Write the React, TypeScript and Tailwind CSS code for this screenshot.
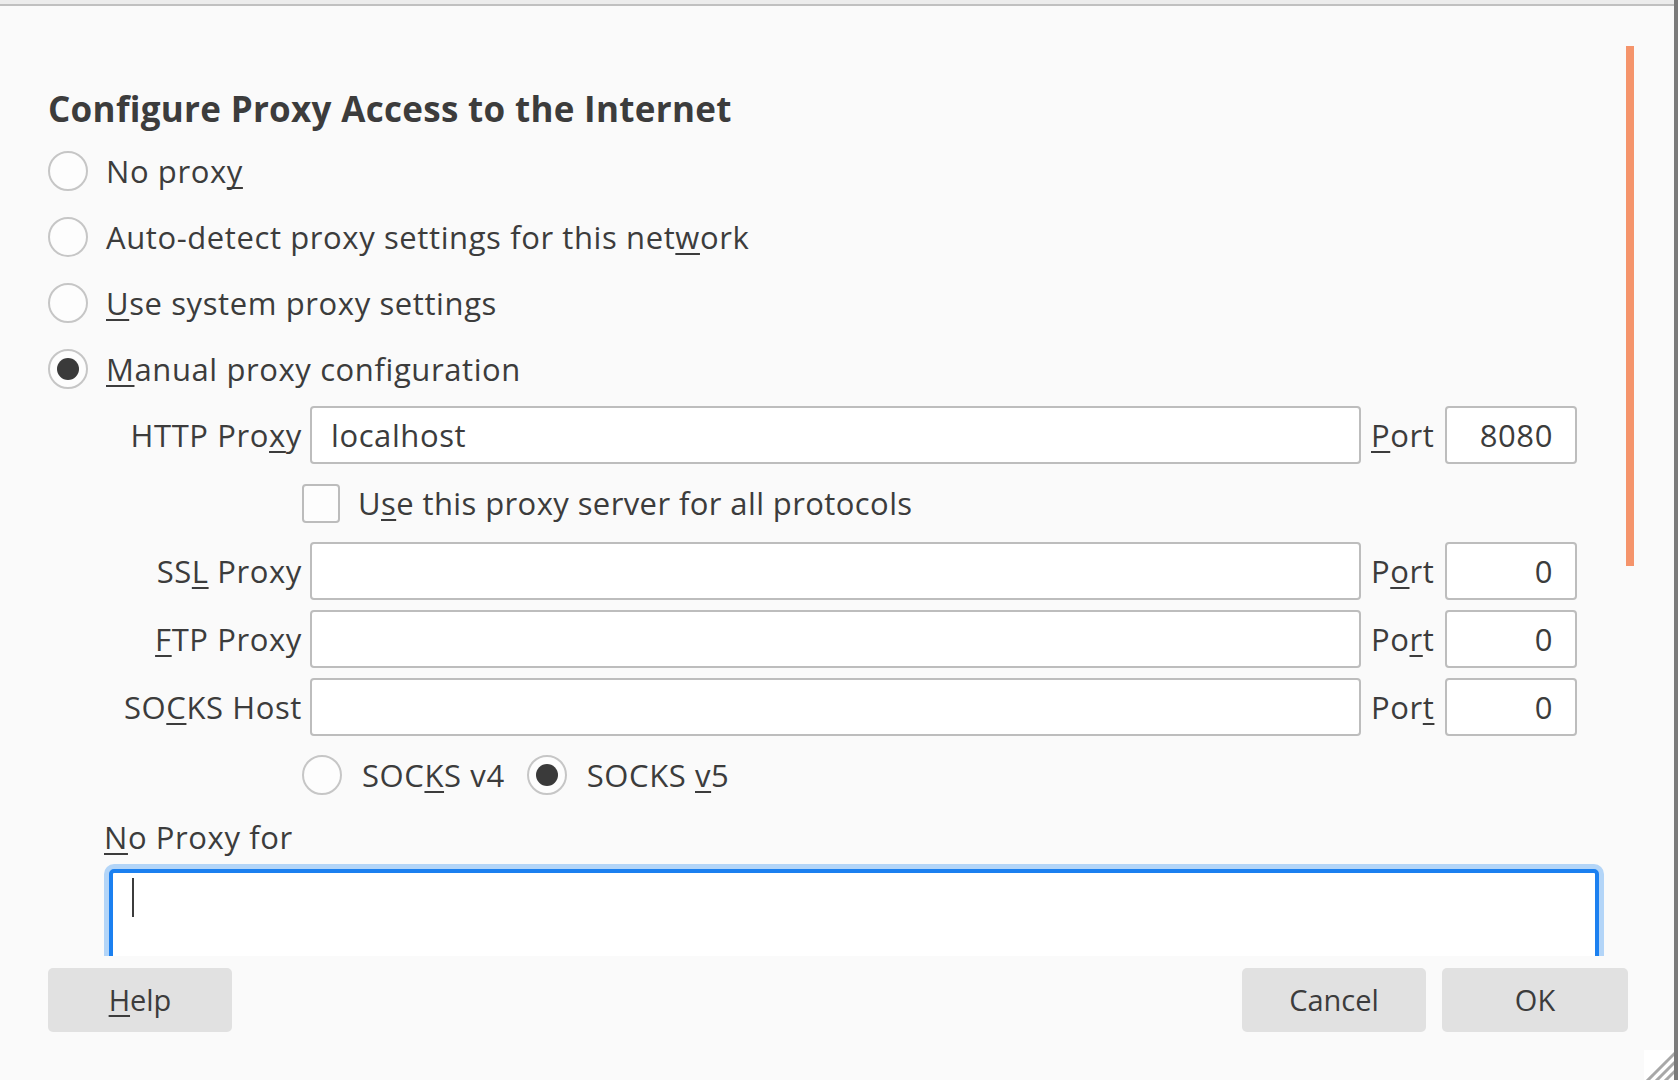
import React from 'react';

const U: React.FC<{ children: React.ReactNode }> = ({ children }) => (
  <span className="underline decoration-[2px] underline-offset-[4px] [text-decoration-skip-ink:none]">
    {children}
  </span>
);

const Radio: React.FC<{ checked?: boolean }> = ({ checked }) => (
  <span className="flex h-[40px] w-[40px] shrink-0 items-center justify-center rounded-full border-2 border-[#c6c6c6] bg-[#fdfdfd]">
    {checked && <span className="h-[22px] w-[22px] rounded-full bg-[#3a3a3a]" />}
  </span>
);

const Option: React.FC<{ checked?: boolean; children: React.ReactNode }> = ({
  checked,
  children,
}) => (
  <div className="flex h-[66px] items-center gap-[18px]">
    <Radio checked={checked} />
    <span>{children}</span>
  </div>
);

type FieldProps = {
  label: React.ReactNode;
  portLabel: React.ReactNode;
  value?: string;
  port: string;
};

const Field: React.FC<FieldProps> = ({ label, portLabel, value, port }) => (
  <div className="flex h-[58px] items-center">
    <div className="w-[196px] whitespace-nowrap text-right">{label}</div>
    <div className="ml-[8px] flex h-full w-[1051px] items-center rounded-[4px] border-2 border-[#bdbdbd] bg-white pl-[19px]">
      {value}
    </div>
    <div className="ml-[10px] w-[64px]">{portLabel}</div>
    <div className="ml-[10px] flex h-full w-[132px] items-center justify-end rounded-[4px] border-2 border-[#bdbdbd] bg-white pr-[22px]">
      {port}
    </div>
  </div>
);

const Button: React.FC<{ className?: string; children: React.ReactNode }> = ({
  className,
  children,
}) => (
  <div
    className={`flex h-[64px] items-center justify-center rounded-[5px] bg-[#e1e1e1] text-[29px] tracking-normal ${className ?? ''}`}>
    {children}
  </div>
);

export default function App() {
  return (
    <div className="relative flex h-[1080px] w-[1678px] flex-col overflow-hidden border-r-[4px] border-[#7b7b7b] bg-[#fafafa] font-['Open_Sans','Noto_Sans',sans-serif] text-[31px] leading-[40px] tracking-[0.6px] text-[#3c3c3c]">
      <div className="h-[4px] shrink-0 bg-[#ececec]" />
      <div className="h-[2px] shrink-0 bg-[#c0c0c0]" />

      {/* scrolling content */}
      <div className="h-[950px] shrink-0 overflow-hidden pl-[48px] pt-[81px]">
        <div className="h-[44px] whitespace-nowrap text-[35px] font-bold leading-[44px] tracking-[0.3px]">
          Configure Proxy Access to the Internet
        </div>
        <div className="mt-[7px]">
          <Option>
            No prox<U>y</U>
          </Option>
          <Option>
            Auto-detect proxy settings for this net<U>w</U>ork
          </Option>
          <Option>
            <U>U</U>se system proxy settings
          </Option>
          <Option checked>
            <U>M</U>anual proxy configuration
          </Option>
        </div>

        <div className="ml-[58px] mt-[4px] flex flex-col gap-[10px]">
          <Field
            label={
              <>
                HTTP Pro<U>x</U>y
              </>
            }
            portLabel={<><U>P</U>ort</>}
            value="localhost"
            port="8080"
          />
          <div className="flex h-[58px] items-center">
            <div className="w-[196px]" />
            <span className="h-[39px] w-[38px] shrink-0 rounded-[4px] border-2 border-[#bcbcbc] bg-[#fdfdfd]" />
            <span className="ml-[18px] tracking-[0.4px]">
              U<U>s</U>e this proxy server for all protocols
            </span>
          </div>
          <Field
            label={
              <>
                SS<U>L</U> Proxy
              </>
            }
            portLabel={<>P<U>o</U>rt</>}
            port="0"
          />
          <Field
            label={
              <>
                <U>F</U>TP Proxy
              </>
            }
            portLabel={<>Po<U>r</U>t</>}
            port="0"
          />
          <Field
            label={
              <>
                SO<U>C</U>KS Host
              </>
            }
            portLabel={<>Por<U>t</U></>}
            port="0"
          />
          <div className="flex h-[58px] items-center">
            <div className="w-[196px]" />
            <Radio />
            <span className="ml-[20px]">
              SOC<U>K</U>S v4
            </span>
            <span className="ml-[22px]">
              <Radio checked />
            </span>
            <span className="ml-[20px]">
              SOCKS <U>v</U>5
            </span>
          </div>
        </div>

        <div className="ml-[56px] mt-[13px]">
          <U>N</U>o Proxy for
        </div>
        <div className="ml-[61px] mt-[12px] h-[200px] w-[1490px] rounded-[5px] border-[4px] border-[#1b80f0] bg-white ring-[5px] ring-[#b3d5f8]">
          <div className="ml-[19px] mt-[5px] h-[39px] w-[2px] bg-[#3c3c3c]" />
        </div>
      </div>

      {/* footer buttons */}
      <div className="flex flex-1 items-start justify-between pl-[48px] pr-[46px] pt-[12px]">
        <Button className="w-[184px]">
          <U>H</U>elp
        </Button>
        <div className="flex gap-[16px]">
          <Button className="w-[184px]">Cancel</Button>
          <Button className="w-[186px]">OK</Button>
        </div>
      </div>

      {/* overlay scrollbar indicator */}
      <div className="absolute left-[1626px] top-[46px] h-[520px] w-[8px] bg-[#f5946b]" />

      {/* resize grip */}
      <div className="absolute bottom-0 right-0 h-[30px] w-[30px] bg-white">
        <svg width="30" height="30" viewBox="0 0 30 30">
          <g stroke="#a8a8a8" strokeWidth="3">
            <line x1="2" y1="32" x2="32" y2="2" />
            <line x1="11" y1="32" x2="32" y2="11" />
            <line x1="20" y1="32" x2="32" y2="20" />
          </g>
        </svg>
      </div>
    </div>
  );
}
